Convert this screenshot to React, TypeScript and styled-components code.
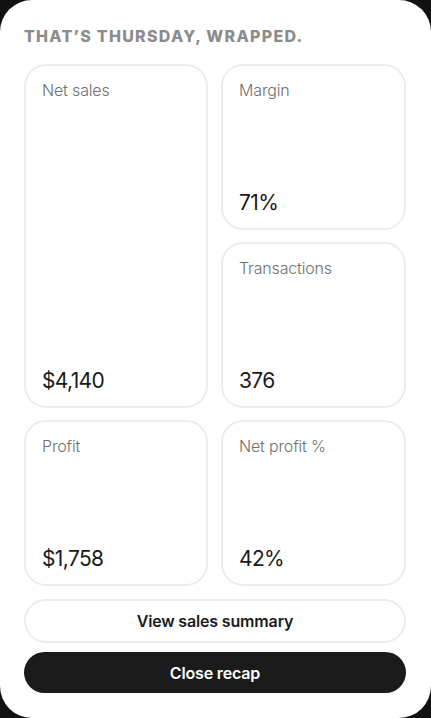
import styled, { createGlobalStyle } from "styled-components";

const GlobalStyle = createGlobalStyle`
  html, body {
    margin: 0;
    padding: 0;
    background: #111111;
  }
  * {
    box-sizing: border-box;
  }
`;

const Sheet = styled.div`
  width: 431px;
  height: 718px;
  background: #ffffff;
  border-radius: 32px;
  padding: 27px 25px 25px 24px;
  display: flex;
  flex-direction: column;
  font-family: Inter, "Noto Sans", sans-serif;
`;

const Title = styled.h2`
  margin: 0 0 19px 0;
  font-size: 16px;
  line-height: 18px;
  font-weight: 800;
  letter-spacing: 0.08em;
  text-transform: uppercase;
  color: #8c8c8c;
`;

const Grid = styled.div`
  display: grid;
  grid-template-columns: 184px 185px;
  grid-template-rows: repeat(3, 166px);
  column-gap: 13px;
  row-gap: 12px;
`;

const Tile = styled.div<{ $tall?: boolean }>`
  grid-row: ${(p) => (p.$tall ? "span 2" : "auto")};
  border: 2px solid #ececec;
  border-radius: 22px;
  padding: 14px 16px 13px 16px;
  display: flex;
  flex-direction: column;
  justify-content: space-between;
`;

const Label = styled.div`
  font-size: 16px;
  font-weight: 300;
  color: #6f6f6f;
  letter-spacing: -0.01em;
`;

const Value = styled.div`
  font-size: 21px;
  font-weight: 400;
  color: #1a1a1a;
  letter-spacing: -0.03em;
`;

const Button = styled.button<{ $dark?: boolean }>`
  display: block;
  width: 100%;
  flex: none;
  border-radius: 999px;
  font-family: Inter, "Noto Sans", sans-serif;
  font-size: 16px;
  font-weight: 600;
  letter-spacing: -0.01em;
  cursor: pointer;
  padding: 0;
  height: ${(p) => (p.$dark ? "41px" : "44px")};
  margin-top: ${(p) => (p.$dark ? "9px" : "13px")};
  background: ${(p) => (p.$dark ? "#1b1b1b" : "#ffffff")};
  color: ${(p) => (p.$dark ? "#ffffff" : "#1b1b1b")};
  border: ${(p) => (p.$dark ? "none" : "2px solid #ececec")};
`;

const stats = [
  { label: "Net sales", value: "$4,140", tall: true },
  { label: "Margin", value: "71%" },
  { label: "Transactions", value: "376" },
  { label: "Profit", value: "$1,758" },
  { label: "Net profit %", value: "42%" },
];

export default function App() {
  return (
    <>
      <GlobalStyle />
      <Sheet>
        <Title>That’s Thursday, wrapped.</Title>
        <Grid>
          {stats.map((s) => (
            <Tile key={s.label} $tall={s.tall}>
              <Label>{s.label}</Label>
              <Value>{s.value}</Value>
            </Tile>
          ))}
        </Grid>
        <Button>View sales summary</Button>
        <Button $dark>Close recap</Button>
      </Sheet>
    </>
  );
}
